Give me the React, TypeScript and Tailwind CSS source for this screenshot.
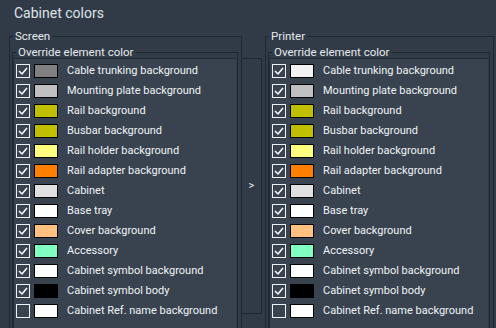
import React from 'react';

interface ColorItem {
  name: string;
  screen: string;
  printer: string;
  checked: boolean;
}

const items: ColorItem[] = [
  { name: 'Cable trunking background', screen: '#808080', printer: '#f2f2f2', checked: true },
  { name: 'Mounting plate background', screen: '#c0c0c0', printer: '#c0c0c0', checked: true },
  { name: 'Rail background', screen: '#c0c000', printer: '#c0c000', checked: true },
  { name: 'Busbar background', screen: '#c0c000', printer: '#c0c000', checked: true },
  { name: 'Rail holder background', screen: '#ffff80', printer: '#ffff80', checked: true },
  { name: 'Rail adapter background', screen: '#ff8000', printer: '#ff8000', checked: true },
  { name: 'Cabinet', screen: '#e0e0e0', printer: '#e0e0e0', checked: true },
  { name: 'Base tray', screen: '#ffffff', printer: '#ffffff', checked: true },
  { name: 'Cover background', screen: '#ffc080', printer: '#ffc080', checked: true },
  { name: 'Accessory', screen: '#80ffc0', printer: '#80ffc0', checked: true },
  { name: 'Cabinet symbol background', screen: '#ffffff', printer: '#ffffff', checked: true },
  { name: 'Cabinet symbol body', screen: '#000000', printer: '#000000', checked: true },
  { name: 'Cabinet Ref. name background', screen: '#ffffff', printer: '#ffffff', checked: false },
];

const Checkbox: React.FC<{ checked: boolean }> = ({ checked }) => (
  <div className="w-[14px] h-[14px] border border-[#eef1f4] flex items-center justify-center flex-shrink-0">
    {checked && (
      <svg width="12" height="12" viewBox="0 0 12 12">
        <polyline points="2,6 5,9 10,3" fill="none" stroke="#ffffff" strokeWidth="1.5" />
      </svg>
    )}
  </div>
);

const ColorList: React.FC<{ target: 'screen' | 'printer' }> = ({ target }) => (
  <div className="flex-1 bg-[#38434f] border-t border-l border-[#232c36] pt-[2px] pl-[2px]">
    {items.map((item) => (
      <div key={item.name} className="flex items-center h-[20px]">
        <Checkbox checked={item.checked} />
        <div
          className="w-[24px] h-[14px] border border-black ml-[4px] flex-shrink-0"
          style={{ backgroundColor: item[target] }}
        />
        <span className="ml-[9px] text-[11px] text-[#f0f3f6] whitespace-nowrap">{item.name}</span>
      </div>
    ))}
  </div>
);

const GroupBox: React.FC<{ title: string; target: 'screen' | 'printer'; className?: string }> = ({
  title,
  target,
  className,
}) => (
  <fieldset className={`border border-[#1f2831] flex flex-col flex-shrink-0 ${className ?? ''}`}>
    <legend className="ml-[3px] px-[2px] text-[11.5px] leading-[12px] text-[#e6e9ec]">{title}</legend>
    <fieldset className="border border-[#1f2831] ml-[2px] mr-[3px] mt-[4px] flex flex-col flex-1 pr-[1px]">
      <legend className="ml-[3px] px-[2px] text-[11.5px] leading-[12px] text-[#e6e9ec]">
        Override element color
      </legend>
      <ColorList target={target} />
    </fieldset>
  </fieldset>
);

export default function App() {
  return (
    <div
      className="w-[496px] h-[328px] overflow-hidden bg-[#303b47] flex flex-col"
      style={{ fontFamily: 'Roboto, "Liberation Sans", sans-serif' }}
    >
      <div className="h-[30px] flex-shrink-0 pl-[14px] pt-[4px] text-[14px] leading-[18px] text-[#dfe3e8]">
        Cabinet colors
      </div>
      <div className="flex flex-shrink-0 pl-[9px]">
        <GroupBox title="Screen" target="screen" className="w-[233px] h-[340px]" />
        <div className="w-[23px] flex flex-col flex-shrink-0 pt-[28px]">
          <button className="w-[20px] h-[256px] border-t border-r border-b border-[#1f2831] flex items-center justify-center text-[11px] text-[#eef1f4]">
            &gt;
          </button>
        </div>
        <GroupBox title="Printer" target="printer" className="w-[229px] h-[340px]" />
      </div>
    </div>
  );
}
